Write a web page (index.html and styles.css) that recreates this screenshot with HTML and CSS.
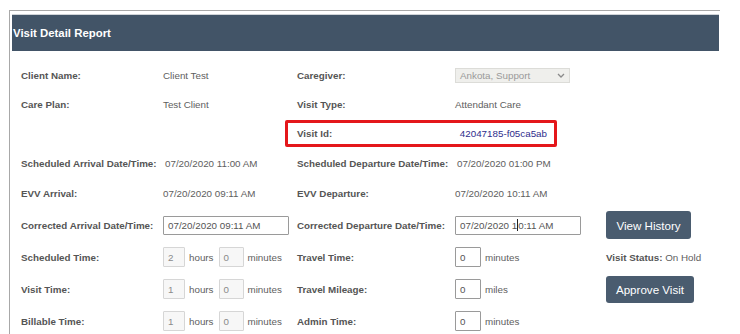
FILE: index.html
```html
<!DOCTYPE html>
<html lang="en">
<head>
  <meta charset="UTF-8">
  <title>Visit Detail Report</title>
  <link rel="stylesheet" href="styles.css">
</head>
<body>
  <div class="panel">
    <div class="panel-header">Visit Detail Report</div>

    <div class="details">
      <!-- row 1 -->
      <div class="f-label">Client Name:</div>
      <div class="f-value">Client Test</div>
      <div class="f-label">Caregiver:</div>
      <div class="f-value">
        <span class="fake-select">Ankota, Support
          <svg width="8" height="5" viewBox="0 0 8 5"><path d="M1 1 L4 4 L7 1" fill="none" stroke="#8a8a8a" stroke-width="1.3"/></svg>
        </span>
      </div>
      <div></div>

      <!-- row 2 -->
      <div class="f-label">Care Plan:</div>
      <div class="f-value">Test Client</div>
      <div class="f-label">Visit Type:</div>
      <div class="f-value">Attendant Care</div>
      <div></div>

      <!-- row 3 -->
      <div></div>
      <div></div>
      <div class="visit-id">
        <span class="f-label">Visit Id:</span>
        <span class="id-value">42047185-f05ca5ab</span>
      </div>
      <div></div>

      <!-- row 4 -->
      <div class="f-label">Scheduled Arrival Date/Time:</div>
      <div class="f-value nudge">07/20/2020 11:00 AM</div>
      <div class="f-label">Scheduled Departure Date/Time:</div>
      <div class="f-value nudge">07/20/2020 01:00 PM</div>
      <div></div>

      <!-- row 5 -->
      <div class="f-label">EVV Arrival:</div>
      <div class="f-value">07/20/2020 09:11 AM</div>
      <div class="f-label">EVV Departure:</div>
      <div class="f-value">07/20/2020 10:11 AM</div>
      <div></div>

      <!-- row 6 -->
      <div class="f-label">Corrected Arrival Date/Time:</div>
      <div class="f-value"><span class="text-box">07/20/2020 09:11 AM</span></div>
      <div class="f-label">Corrected Departure Date/Time:</div>
      <div class="f-value"><span class="text-box">07/20/2020 1<span class="caret"></span>0:11 AM</span></div>
      <div><button class="btn btn-history">View History</button></div>

      <!-- row 7 -->
      <div class="f-label">Scheduled Time:</div>
      <div class="f-value time-group">
        <span class="num-box disabled hrs">2</span> hours
        <span class="num-box disabled mins">0</span> minutes
      </div>
      <div class="f-label">Travel Time:</div>
      <div class="f-value time-group"><span class="num-box">0</span> minutes</div>
      <div class="status"><b>Visit Status:</b> On Hold</div>

      <!-- row 8 -->
      <div class="f-label">Visit Time:</div>
      <div class="f-value time-group">
        <span class="num-box disabled hrs">1</span> hours
        <span class="num-box disabled mins">0</span> minutes
      </div>
      <div class="f-label">Travel Mileage:</div>
      <div class="f-value time-group"><span class="num-box">0</span> miles</div>
      <div><button class="btn btn-approve">Approve Visit</button></div>

      <!-- row 9 -->
      <div class="f-label">Billable Time:</div>
      <div class="f-value time-group">
        <span class="num-box disabled hrs">1</span> hours
        <span class="num-box disabled mins">0</span> minutes
      </div>
      <div class="f-label">Admin Time:</div>
      <div class="f-value time-group"><span class="num-box">0</span> minutes</div>
      <div></div>
    </div>
  </div>
</body>
</html>
```

FILE: styles.css
```css
html, body {
  margin: 0;
  padding: 0;
  height: 100%;
  overflow: hidden;
  background-color: #fff;
  font-family: 'Liberation Sans', Arial, sans-serif;
  color: #555;
}

.panel {
  margin: 10px 0 0 9px;
  width: 710px;
  height: 320px;
  overflow: hidden;
  border-top: 1px solid #a8a8a8;
  border-left: 1px solid #a8a8a8;
  padding-top: 3px;
}

.panel-header {
  margin-left: 2px;
  width: 706px;
  height: 36px;
  border-top: 1px solid #cfd3d7;
  background-color: #425467;
  color: #fff;
  font-weight: bold;
  font-size: 11.4px;
  line-height: 36px;
  padding-left: 1px;
}

.details {
  display: grid;
  grid-template-columns: 142px 134px 158px 150px auto;
  grid-template-rows: 29px 29px 29px 30px 31px repeat(4, 32px);
  align-items: center;
  margin-top: 10px;
  padding-left: 11px;
  font-size: 9.8px;
  white-space: nowrap;
}

.f-label {
  font-weight: bold;
  color: #555;
}

.f-value {
  color: #5e5e5e;
}

.nudge {
  padding-left: 2px;
}

.fake-select {
  display: inline-flex;
  align-items: center;
  justify-content: space-between;
  box-sizing: border-box;
  width: 115px;
  height: 15px;
  padding: 0 4px 0 4px;
  background-color: #efefec;
  border: 1px solid #dcdcd8;
  color: #9a9a9a;
}

.visit-id {
  grid-column: 3 / span 2;
  justify-self: start;
  margin-left: -12px;
  width: 272px;
  height: 27px;
  box-sizing: border-box;
  border: 3px solid #e4171b;
  border-radius: 2px;
  padding: 0 7px 0 9px;
  display: flex;
  align-items: center;
  justify-content: space-between;
}

.id-value {
  color: #2e2c8c;
}

.text-box {
  display: inline-flex;
  align-items: center;
  box-sizing: border-box;
  width: 126px;
  height: 19px;
  padding-left: 4px;
  border: 1px solid #9a9a9a;
  border-radius: 1px;
  background-color: #fff;
  color: #555;
}

.caret {
  display: inline-block;
  width: 1px;
  height: 12px;
  background-color: #222;
}

.time-group {
  display: flex;
  align-items: center;
  gap: 4px;
}

.num-box {
  display: inline-flex;
  align-items: center;
  box-sizing: border-box;
  width: 26px;
  height: 20px;
  padding-left: 4px;
  border: 1px solid #9a9a9a;
  border-radius: 1px;
  background-color: #fff;
  color: #555;
}

.num-box.disabled {
  border-color: #d6d6d6;
  background-color: #f7f7f7;
  color: #8a8a8a;
}

.num-box.hrs {
  width: 22px;
}

.num-box.mins {
  width: 25px;
  margin-left: 1px;
}

.status {
  padding-left: 1px;
  color: #5e5e5e;
}

.status b {
  color: #555;
}

.btn {
  display: block;
  margin-left: 1px;
  height: 28px;
  border: none;
  border-radius: 3px;
  background-color: #4a5c6f;
  color: #fff;
  font-family: 'Liberation Sans', Arial, sans-serif;
  font-size: 11.6px;
  padding: 0;
  cursor: pointer;
}

.btn-history {
  width: 85px;
}

.btn-approve {
  width: 88px;
  height: 27px;
}
```
